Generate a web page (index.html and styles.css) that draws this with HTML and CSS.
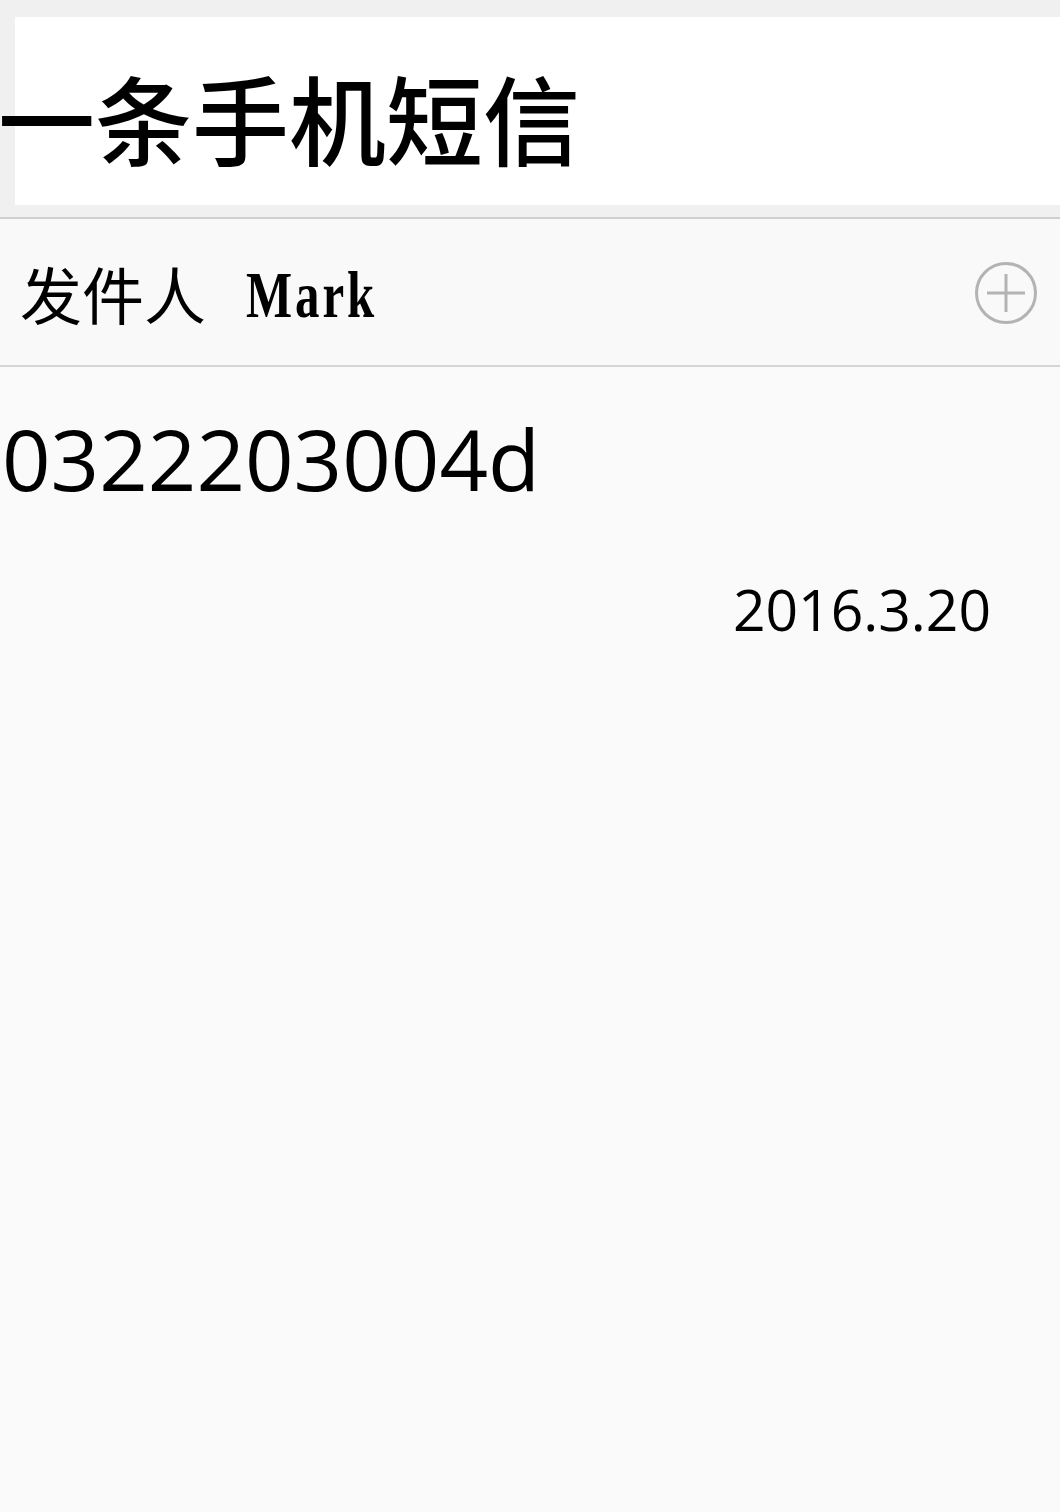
FILE: index.html
```html
<!DOCTYPE html>
<html lang="zh-CN">
<head>
<meta charset="utf-8">
<title>一条手机短信</title>
<link rel="stylesheet" href="styles.css">
</head>
<body>
  <header class="top">
    <div class="title-box">
      <h1 class="title">一条手机短信</h1>
    </div>
  </header>
  <section class="sender-row">
    <div class="sender">
      <span class="sender-label">发件人</span>
      <span class="sender-name">Mark</span>
    </div>
    <svg class="add-icon" width="64" height="64" viewBox="0 0 64 64" aria-hidden="true">
      <circle cx="32" cy="32" r="29.5" fill="none" stroke="#b3b3b3" stroke-width="3"/>
      <path d="M13 32 H51 M32 13 V51" stroke="#b3b3b3" stroke-width="3" fill="none"/>
    </svg>
  </section>
  <main class="message">
    <div class="code">0322203004d</div>
    <div class="date">2016.3.20</div>
  </main>
</body>
</html>
```

FILE: styles.css
```css
html, body {
  margin: 0;
  padding: 0;
}
body {
  background: #fafafa;
  width: 1060px;
  height: 1512px;
  overflow: hidden;
  color: #000;
}
.top {
  background: #f0f0f0;
  padding: 17px 0 12px 15px;
  border-bottom: 2px solid #cfcfcf;
}
.title-box {
  background: #fff;
  height: 188px;
  box-sizing: border-box;
  padding-top: 50px;
}
.title {
  margin: 0 0 0 -17px;
  font-family: "Noto Sans CJK SC", sans-serif;
  font-weight: 500;
  font-size: 97px;
  line-height: 97px;
  white-space: nowrap;
}
.sender-row {
  display: flex;
  align-items: center;
  justify-content: space-between;
  height: 146px;
  background: #f9f9f9;
  border-bottom: 2px solid #d4d4d4;
  padding: 0 22px 0 20px;
}
.sender {
  display: flex;
  align-items: center;
}
.sender-label {
  font-family: "Noto Sans CJK SC", serif;
  font-size: 62px;
  line-height: 1;
  padding-top: 2px;
}
.sender-name {
  display: inline-block;
  font-family: "Liberation Serif", serif;
  font-weight: 700;
  font-size: 66px;
  line-height: 1;
  margin-left: 40px;
  padding-top: 6px;
  letter-spacing: 4px;
  transform: scaleX(0.74);
  transform-origin: left center;
}
.add-icon {
  display: block;
  margin-top: 2px;
}
.message {
  padding-top: 33px;
}
.code {
  font-family: "Open Sans", sans-serif;
  font-size: 85px;
  line-height: 116px;
  padding-left: 2px;
}
.date {
  margin-top: 54px;
  text-align: right;
  padding-right: 69px;
  font-family: "Open Sans", sans-serif;
  font-size: 57px;
  line-height: 78px;
}
```
